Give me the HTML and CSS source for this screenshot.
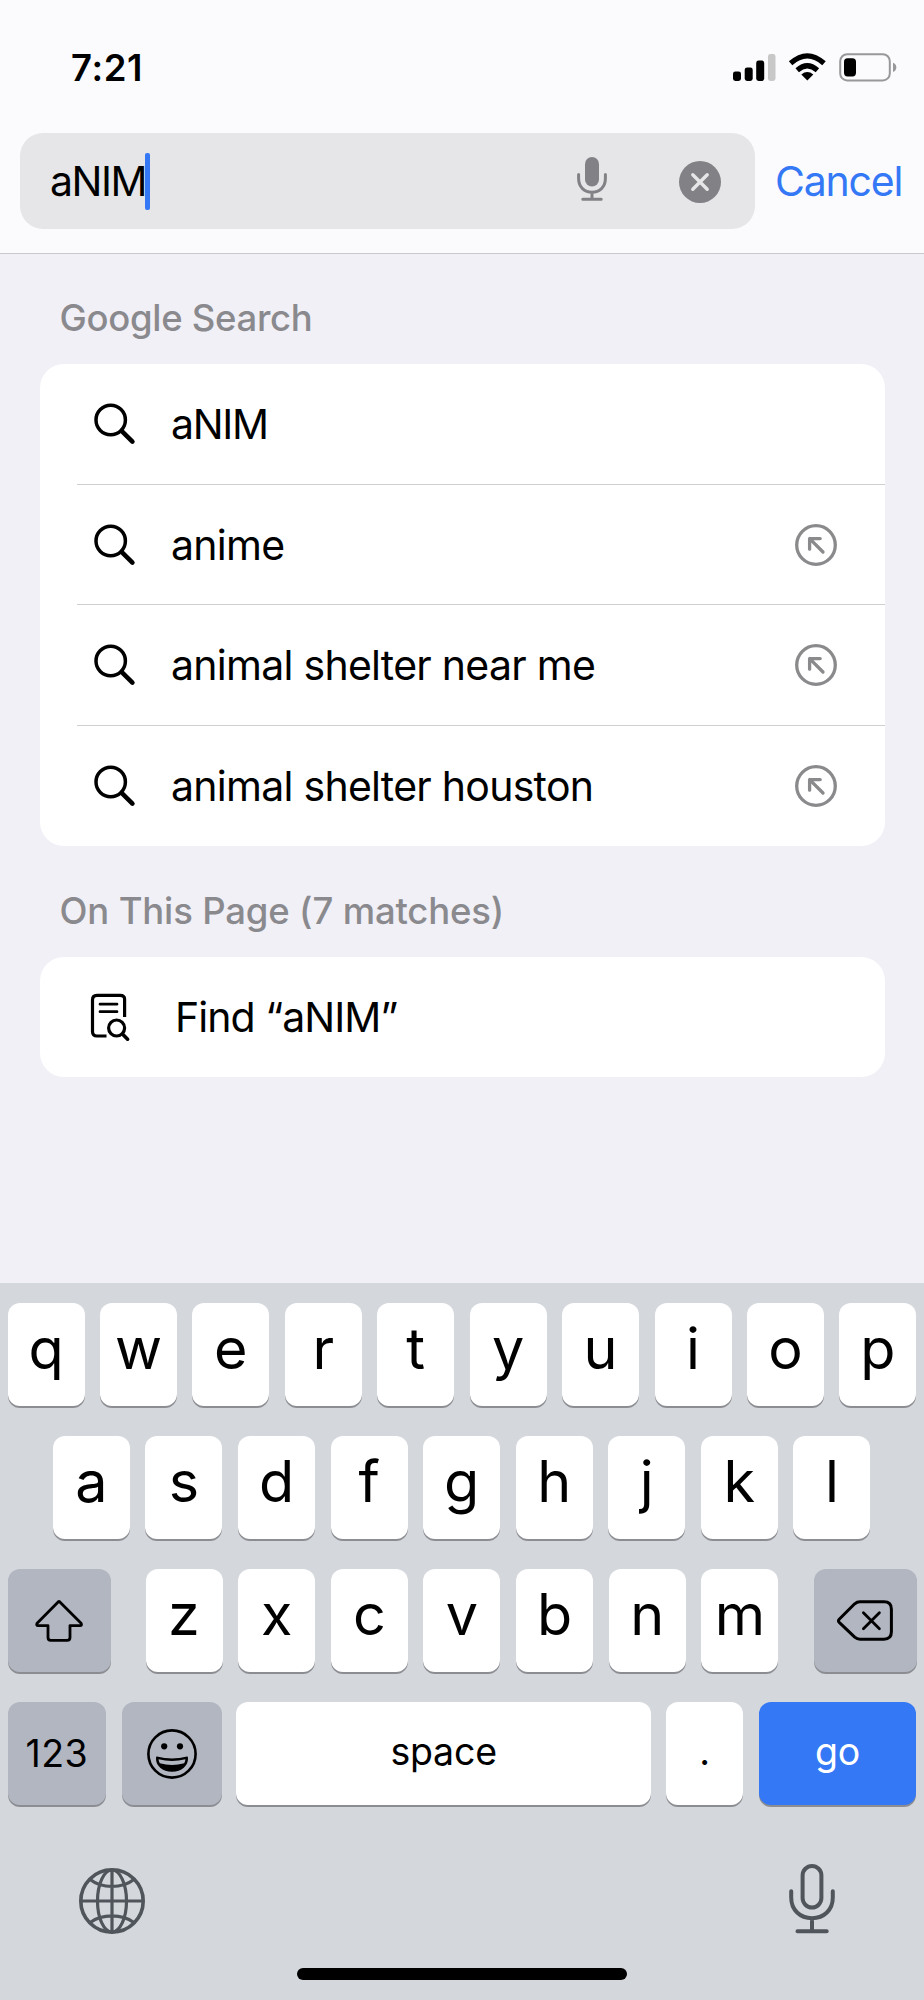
FILE: index.html
```html
<!DOCTYPE html>
<html lang="en">
<head>
<meta charset="utf-8">
<title>Search</title>
<link rel="stylesheet" href="styles.css">
</head>
<body>
<svg class="defs" aria-hidden="true">
  <symbol id="magnifier" viewBox="0 0 42 42"><circle cx="16.7" cy="17" r="14.7" fill="none" stroke="#000" stroke-width="3.5"/><path d="M27.6 27.8 38.4 38.6" stroke="#000" stroke-width="4.6" stroke-linecap="round"/></symbol>
  <symbol id="insert" viewBox="0 0 42 42"><g fill="none" stroke="#8a8a8c" stroke-width="3.3" stroke-linecap="round" stroke-linejoin="round"><circle cx="21" cy="21" r="19.3"/><path d="M25.2 14.6H14.6V25.2M14.6 14.6 28 28"/></g></symbol>
</svg>
<div class="phone">
  <header class="top">
    <div class="status">
      <span class="time">7:21</span>
      <svg class="status-icons" width="166" height="30" viewBox="0 0 166 30">
        <rect x="0" y="18.4" width="8" height="9.6" rx="2.4"/><rect x="11.7" y="14.4" width="8" height="13.6" rx="2.4"/><rect x="23.2" y="7.6" width="8" height="20.4" rx="2.4"/><rect x="35" y="1" width="7.5" height="27" rx="2.4" fill="#c8c8c9"/>
        <path d="M74.3 27.6 68.3 21.4Q74.3 16.8 80.3 21.4Z"/>
        <path d="M64.2 17.2Q74.3 8.4 84.4 17.2" fill="none" stroke="#000" stroke-width="5.2"/>
        <path d="M57.6 10.3Q74.3-4.6 91 10.3" fill="none" stroke="#000" stroke-width="5.2"/>
        <rect x="107.2" y="1.2" width="49.6" height="26.2" rx="7" fill="none" stroke="#98989a" stroke-width="2"/>
        <rect x="111" y="5.2" width="12" height="18.2" rx="3.6"/>
        <path d="M160 9.8Q163.3 11.2 163.3 14.4T160 19Z" fill="#98989a"/>
      </svg>
    </div>
    <div class="search-row">
      <div class="field">
        <span class="query">aNIM</span><span class="caret"></span>
        <svg class="mic" width="30" height="46" viewBox="0 0 30 46"><rect x="8" y="1" width="14" height="29.5" rx="7" fill="#828286"/><path d="M1.6 18.4V22.6C1.6 31 7.5 36.3 15 36.3S28.4 31 28.4 22.6V18.4M15 36.3V43.2M5.8 43.2H24.2" fill="none" stroke="#828286" stroke-width="3" stroke-linecap="round"/></svg>
        <svg class="clear" width="42" height="42" viewBox="0 0 42 42"><circle cx="21" cy="21" r="21" fill="#828286"/><path d="M13.8 13.8 28.2 28.2M28.2 13.8 13.8 28.2" stroke="#e6e6e8" stroke-width="3.4" stroke-linecap="round"/></svg>
      </div>
      <span class="cancel">Cancel</span>
    </div>
  </header>
  <main class="results">
    <h2 class="heading">Google Search</h2>
    <ul class="card">
      <li class="row"><svg class="icon"><use href="#magnifier"/></svg><span class="label caps">aNIM</span></li>
      <li class="row"><svg class="icon"><use href="#magnifier"/></svg><span class="label">anime</span><svg class="icon"><use href="#insert"/></svg></li>
      <li class="row"><svg class="icon"><use href="#magnifier"/></svg><span class="label">animal shelter near me</span><svg class="icon"><use href="#insert"/></svg></li>
      <li class="row"><svg class="icon"><use href="#magnifier"/></svg><span class="label">animal shelter houston</span><svg class="icon"><use href="#insert"/></svg></li>
    </ul>
    <h2 class="heading matches">On This Page (7 matches)</h2>
    <ul class="card">
      <li class="row find"><svg class="page-icon" width="42" height="50" viewBox="0 0 42 50"><g fill="none" stroke="#000" stroke-width="3.2" stroke-linecap="round"><path d="M34.6 25V7.3Q34.6 3.4 30.1 3.4H7Q2.5 3.4 2.5 7.900V39.5Q2.5 44 7 44H16.5" stroke-linecap="butt"/><path d="M10 12.2H27M10 19.700H27" stroke-width="2.700"/><circle cx="26.6" cy="36" r="8"/><path d="M32.7 42.200 37.600 47.200" stroke-width="3.600"/></g></svg><span class="label">Find “aNIM”</span></li>
    </ul>
  </main>
  <section class="keyboard">
    <div class="keys"><span class="key">q</span><span class="key">w</span><span class="key">e</span><span class="key">r</span><span class="key">t</span><span class="key">y</span><span class="key">u</span><span class="key">i</span><span class="key">o</span><span class="key">p</span></div>
    <div class="keys middle"><span class="key">a</span><span class="key">s</span><span class="key">d</span><span class="key">f</span><span class="key">g</span><span class="key">h</span><span class="key">j</span><span class="key">k</span><span class="key">l</span></div>
    <div class="keys lower">
      <span class="key mod wide"><svg width="50" height="44" viewBox="0 0 50 44"><path d="M24.4 2.7 3.1 24.2Q1.9 26.6 4.3 26.6H14V38.6Q14 41.4 16.8 41.4H33.2Q36 41.4 36 38.6V26.6H45.9Q48.3 26.6 47.1 24.2L25.6 2.7Q25 2.2 24.4 2.7Z" fill="none" stroke="#000" stroke-width="2.8" stroke-linejoin="round"/></svg></span>
      <div class="letters"><span class="key">z</span><span class="key">x</span><span class="key">c</span><span class="key">v</span><span class="key">b</span><span class="key">n</span><span class="key">m</span></div>
      <span class="key mod wide"><svg width="56" height="42" viewBox="0 0 56 42"><g fill="none" stroke="#000" stroke-width="3" stroke-linejoin="round" stroke-linecap="round"><path d="M2.2 19.3 17.7 3.8Q20 1.8 23 1.8H47Q54.4 1.8 54.4 9.2V31.8Q54.4 39.2 47 39.2H23Q20 39.2 17.7 37.2L2.2 22.3Q.8 20.8 2.2 19.3Z"/><path d="M26.4 12.7 42.4 28.7M42.4 12.7 26.4 28.7" stroke-width="2.8"/></g></svg></span>
    </div>
    <div class="keys bottom">
      <span class="key mod small k123">123</span>
      <span class="key mod kemoji"><svg width="50" height="50" viewBox="0 0 50 50"><circle cx="25" cy="25" r="23.6" fill="none" stroke="#000" stroke-width="2.6"/><circle cx="17.2" cy="17.3" r="3.1"/><circle cx="33" cy="17.3" r="3.1"/><path d="M9.8 28.2Q25 32 40.2 28.2C41.2 36.6 34 42 25 42S8.8 36.6 9.8 28.2Z" stroke="#000" stroke-width="1.4" stroke-linejoin="round"/><path d="M11.6 30.2Q25 33.8 38.4 30.2Q38.4 32.6 37.2 34.2Q25 37.6 12.8 34.2Q11.6 32.6 11.6 30.2Z" fill="#b2b6c1"/></svg></span>
      <span class="key small kspace">space</span>
      <span class="key small kdot">.</span>
      <span class="key small kgo">go</span>
    </div>
    <div class="dock">
      <svg width="66" height="66" viewBox="0 0 66 66"><g fill="none" stroke="#50555b" stroke-width="3.2"><circle cx="33" cy="33" r="31.2" stroke-width="3.6"/><ellipse cx="33" cy="33" rx="14.5" ry="31"/><path d="M33 2V64M2 33H64M11.5 11.8Q20 18.500 33 18.500T54.5 11.800M11.500 54.200Q20 47.800 33 47.800T54.500 54.200"/></g></svg>
      <svg class="dictate" width="48" height="72" viewBox="0 0 48 72"><g fill="none" stroke="#50555b" stroke-width="4" stroke-linecap="round"><rect x="14.6" y="3" width="18.8" height="41.5" rx="9.4"/><path d="M3.2 28.2V34.5C3.2 47 12 55.2 24 55.2S44.8 47 44.8 34.5V28.2M24 55.2V68.2M9.5 68.2H38.7"/></g></svg>
    </div>
    <div class="home"></div>
  </section>
</div>
</body>
</html>
```
FILE: styles.css
```css
* { box-sizing: border-box; }
body { margin: 0; font-family: Inter, "Liberation Sans", sans-serif; color: #000; }
svg { display: block; flex: none; }
.defs { position: absolute; width: 0; height: 0; }
.phone { width: 924px; height: 2000px; display: flex; flex-direction: column; background: #f1f0f6; overflow: hidden; }
.top { height: 254px; background: #fbfbfd; border-bottom: 1px solid #c9c9cb; }
.status { height: 133px; display: flex; justify-content: space-between; align-items: flex-start; padding: 53px 25px 0 71px; }
.time { font-size: 36.5px; line-height: 30px; font-weight: 600; letter-spacing: 0.6px; }
.search-row { display: flex; align-items: center; padding-left: 20px; }
.field { width: 735px; height: 96px; border-radius: 23px; background: #e6e6e8; display: flex; align-items: center; padding: 0 34px 0 30px; margin-right: 20px; font-size: 41px; }
.query { width: 94.5px; letter-spacing: -1.5px; }
.caret { width: 5px; height: 57px; border-radius: 2px; background: #3478f6; }
.mic { margin: -4px 72px 0 auto; }
.clear { margin-top: 2px; }
.cancel { color: #3478f6; font-size: 41px; letter-spacing: -1.2px; }
.results { height: 1029px; flex: none; padding: 0 39.5px; }
.heading { margin: 0; height: 110px; padding: 18px 0 0 20px; display: flex; align-items: center; font-size: 36.5px; font-weight: 500; letter-spacing: -0.3px; color: #8a8a8e; }
.matches { height: 111px; letter-spacing: -0.17px; }
.card { list-style: none; margin: 0; padding: 0; background: #fff; border-radius: 24px; }
.row { height: 120.5px; display: flex; align-items: center; padding: 0 47.5px 0 54.5px; font-size: 41px; letter-spacing: -0.73px; background: linear-gradient(#cfcfd2, #cfcfd2) 37px 100% / 100% 1px no-repeat; }
.row:last-child { background: none; }
.icon { width: 42px; height: 42px; }
.label { flex: 1; padding-left: 35px; }
.caps { letter-spacing: -1.3px; }
.find { height: 120px; padding-left: 50.5px; letter-spacing: -0.97px; }
.find .label { padding-left: 43px; }
.keyboard { flex: 1; background: #d4d7dc; padding: 20px 7.5px 0; }
.keys { display: flex; justify-content: space-between; height: 103px; margin-bottom: 30px; }
.middle { padding: 0 46px 0 45.4px; }
.letters { display: flex; justify-content: space-between; width: 633px; }
.key { width: 77px; height: 103px; border-radius: 12px; background: #fff; box-shadow: 0 2px 0 #8b8d92; display: flex; align-items: center; justify-content: center; padding-bottom: 13px; font-size: 57.5px; font-weight: 370; }
.mod { background: #b2b6c1; padding-bottom: 0; }
.wide { width: 103px; }
.small { font-size: 37.5px; font-weight: 400; padding-bottom: 5px; }
.bottom { justify-content: flex-start; }
.k123 { width: 98.7px; padding-bottom: 0; letter-spacing: 0.5px; margin-right: 15.8px; }
.kemoji { width: 100.6px; margin-right: 13.9px; }
.kspace { width: 414.7px; letter-spacing: -0.2px; margin-right: 15.3px; }
.kdot { margin-right: 15.6px; }
.kgo { width: 157.8px; background: #3478f6; color: #fff; }
.dock { display: flex; justify-content: space-between; align-items: center; padding: 0 80.7px 0 71.5px; height: 72px; margin-top: 60px; }
.dictate { margin-top: -4px; }
.home { width: 330px; height: 12px; border-radius: 6px; background: #000; margin: 31px auto 0; }
```
